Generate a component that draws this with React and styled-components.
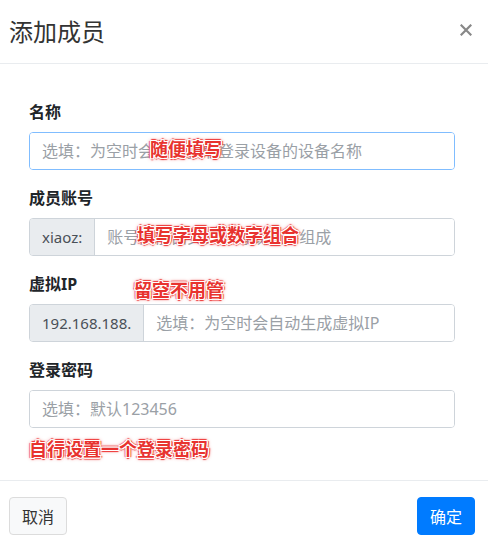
import React from "react";
import styled, { createGlobalStyle } from "styled-components";

const GlobalStyle = createGlobalStyle`
  html, body {
    margin: 0;
    padding: 0;
    background: #fff;
  }
  body {
    font-family: "Noto Sans", "Noto Sans CJK SC", sans-serif;
    color: #212529;
  }
`;

const Modal = styled.div`
  width: 488px;
  background: #fff;
`;

const Header = styled.div`
  display: flex;
  align-items: center;
  justify-content: space-between;
  padding: 16px 16px 15px 9px;
  border-bottom: 1px solid #e9ecef;
`;

const Title = styled.h5`
  margin: 0;
  font-size: 24px;
  font-weight: 400;
  line-height: 32px;
  color: #333;
`;

const Close = styled.button`
  border: 0;
  background: none;
  padding: 0;
  width: 12px;
  height: 12px;
  margin-right: 0;
  margin-top: -4px;
  cursor: pointer;
  display: flex;
`;

const Body = styled.div`
  padding: 36px 33px 22px 29px;
`;

const Group = styled.div`
  margin-bottom: ${(p) => (p.last ? "0" : "16px")};
`;

const LabelRow = styled.div`
  position: relative;
  margin-bottom: 8px;
`;

const Label = styled.label`
  display: block;
  font-size: 16px;
  font-weight: 700;
  line-height: 24px;
  color: #212529;
`;

const InputWrap = styled.div`
  position: relative;
  display: flex;
  height: 38px;
  box-sizing: border-box;
  border: 1px solid ${(p) => (p.focused ? "#80bdff" : "#ced4da")};
  border-radius: 4px;
  overflow: hidden;
`;

const Prepend = styled.span`
  display: flex;
  align-items: center;
  padding: 0 12px;
  background: #e9ecef;
  border-right: 1px solid #ced4da;
  color: #495057;
  font-size: 15px;
  white-space: nowrap;
`;

const Input = styled.input`
  flex: 1;
  min-width: 0;
  border: 0;
  outline: none;
  padding: 0 12px;
  font-family: "Noto Sans", "Noto Sans CJK SC", sans-serif;
  font-size: 16px;
  color: #495057;
  background: #fff;
  &::placeholder {
    color: #9aa0a6;
  }
`;

const Note = styled.span`
  position: ${(p) => (p.inline ? "static" : "absolute")};
  display: ${(p) => (p.inline ? "block" : "inline")};
  left: ${(p) => p.x}px;
  top: ${(p) => p.y}px;
  margin-top: ${(p) => (p.inline ? "10px" : "0")};
  font-family: "Noto Sans CJK SC", sans-serif;
  font-size: 18px;
  font-weight: 700;
  line-height: 20px;
  color: #e8332f;
  white-space: nowrap;
  pointer-events: none;
  text-shadow:
    1px 0 0 #fff, -1px 0 0 #fff, 0 1px 0 #fff, 0 -1px 0 #fff,
    1px 1px 0 #fff, -1px -1px 0 #fff, 1px -1px 0 #fff, -1px 1px 0 #fff,
    2px 0 1px #e33, -2px 0 1px #e33, 0 2px 1px #e33, 0 -2px 1px #e33,
    0 0 4px rgba(225, 45, 45, 0.9);
`;

const Footer = styled.div`
  display: flex;
  justify-content: space-between;
  align-items: center;
  padding: 16px 13px 16px 9px;
  border-top: 1px solid #e9ecef;
`;

const Button = styled.button`
  height: 38px;
  padding: 0 12px;
  border-radius: 4px;
  font-family: "Noto Sans CJK SC", sans-serif;
  font-size: 16px;
  cursor: pointer;
  border: 1px solid ${(p) => (p.primary ? "#007bff" : "#dcdcdc")};
  background: ${(p) => (p.primary ? "#007bff" : "#f8f9fa")};
  color: ${(p) => (p.primary ? "#fff" : "#333")};
`;

export default function App() {
  return (
    <>
      <GlobalStyle />
      <Modal>
        <Header>
          <Title>添加成员</Title>
          <Close aria-label="close">
            <svg width="12" height="12" viewBox="0 0 12 12">
              <path d="M1.5 1.5 L10.5 10.5 M10.5 1.5 L1.5 10.5" stroke="#888" strokeWidth="2.2" strokeLinecap="square" />
            </svg>
          </Close>
        </Header>
        <Body>
          <Group>
            <LabelRow>
              <Label>名称</Label>
            </LabelRow>
            <InputWrap focused>
              <Input placeholder="选填：为空时会自动获取登录设备的设备名称" />
              <Note x={120} y={5}>随便填写</Note>
            </InputWrap>
          </Group>
          <Group>
            <LabelRow>
              <Label>成员账号</Label>
            </LabelRow>
            <InputWrap>
              <Prepend>xiaoz:</Prepend>
              <Input placeholder="账号只能由英文字母或数字组成" />
              <Note x={107} y={5}>填写字母或数字组合</Note>
            </InputWrap>
          </Group>
          <Group>
            <LabelRow>
              <Label>虚拟IP</Label>
              <Note x={105} y={7}>留空不用管</Note>
            </LabelRow>
            <InputWrap>
              <Prepend>192.168.188.</Prepend>
              <Input placeholder="选填：为空时会自动生成虚拟IP" />
            </InputWrap>
          </Group>
          <Group last>
            <LabelRow>
              <Label>登录密码</Label>
            </LabelRow>
            <InputWrap>
              <Input placeholder="选填：默认123456" />
            </InputWrap>
            <Note inline>自行设置一个登录密码</Note>
          </Group>
        </Body>
        <Footer>
          <Button>取消</Button>
          <Button primary>确定</Button>
        </Footer>
      </Modal>
    </>
  );
}
